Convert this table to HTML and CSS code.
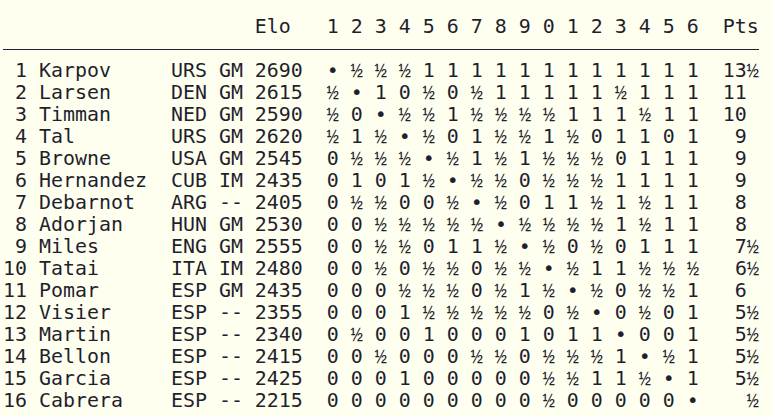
FILE: index.html
```html
<!DOCTYPE html>
<html lang="en">
<head>
<meta charset="utf-8">
<title>Crosstable</title>
<link rel="stylesheet" href="styles.css">
</head>
<body>
<div class="table">
<pre class="head">                     Elo   1 2 3 4 5 6 7 8 9 0 1 2 3 4 5 6  Pts</pre>
<div class="rule"></div>
<pre class="rows"> 1 Karpov     URS GM 2690  • <i>½</i> <i>½</i> <i>½</i> 1 1 1 1 1 1 1 1 1 1 1 1  13<i>½</i>
 2 Larsen     DEN GM 2615  <i>½</i> • 1 0 <i>½</i> 0 <i>½</i> 1 1 1 1 1 <i>½</i> 1 1 1  11
 3 Timman     NED GM 2590  <i>½</i> 0 • <i>½</i> <i>½</i> 1 <i>½</i> <i>½</i> <i>½</i> <i>½</i> 1 1 1 <i>½</i> 1 1  10
 4 Tal        URS GM 2620  <i>½</i> 1 <i>½</i> • <i>½</i> 0 1 <i>½</i> <i>½</i> 1 <i>½</i> 0 1 1 0 1   9
 5 Browne     USA GM 2545  0 <i>½</i> <i>½</i> <i>½</i> • <i>½</i> 1 <i>½</i> 1 <i>½</i> <i>½</i> <i>½</i> 0 1 1 1   9
 6 Hernandez  CUB IM 2435  0 1 0 1 <i>½</i> • <i>½</i> <i>½</i> 0 <i>½</i> <i>½</i> <i>½</i> 1 1 1 1   9
 7 Debarnot   ARG -- 2405  0 <i>½</i> <i>½</i> 0 0 <i>½</i> • <i>½</i> 0 1 1 <i>½</i> 1 <i>½</i> 1 1   8
 8 Adorjan    HUN GM 2530  0 0 <i>½</i> <i>½</i> <i>½</i> <i>½</i> <i>½</i> • <i>½</i> <i>½</i> <i>½</i> <i>½</i> 1 <i>½</i> 1 1   8
 9 Miles      ENG GM 2555  0 0 <i>½</i> <i>½</i> 0 1 1 <i>½</i> • <i>½</i> 0 <i>½</i> 0 1 1 1   7<i>½</i>
10 Tatai      ITA IM 2480  0 0 <i>½</i> 0 <i>½</i> <i>½</i> 0 <i>½</i> <i>½</i> • <i>½</i> 1 1 <i>½</i> <i>½</i> <i>½</i>   6<i>½</i>
11 Pomar      ESP GM 2435  0 0 0 <i>½</i> <i>½</i> <i>½</i> 0 <i>½</i> 1 <i>½</i> • <i>½</i> 0 <i>½</i> <i>½</i> 1   6
12 Visier     ESP -- 2355  0 0 0 1 <i>½</i> <i>½</i> <i>½</i> <i>½</i> <i>½</i> 0 <i>½</i> • 0 <i>½</i> 0 1   5<i>½</i>
13 Martin     ESP -- 2340  0 <i>½</i> 0 0 1 0 0 0 1 0 1 1 • 0 0 1   5<i>½</i>
14 Bellon     ESP -- 2415  0 0 <i>½</i> 0 0 0 <i>½</i> <i>½</i> 0 <i>½</i> <i>½</i> <i>½</i> 1 • <i>½</i> 1   5<i>½</i>
15 Garcia     ESP -- 2425  0 0 0 1 0 0 0 0 0 <i>½</i> <i>½</i> 1 1 <i>½</i> • 1   5<i>½</i>
16 Cabrera    ESP -- 2215  0 0 0 0 0 0 0 0 0 <i>½</i> 0 0 0 0 0 •    <i>½</i></pre>
</div>
</body>
</html>
```

FILE: styles.css
```css
html, body {
  margin: 0;
  padding: 0;
  background: #fffff0;
}

.table {
  padding: 16px 0 0 3px;
  font-family: "DejaVu Sans Mono", monospace;
  font-size: 19.93px;
  line-height: 22px;
  color: #1f1f2e;
}

.head,
.rows {
  margin: 0;
  font: inherit;
  white-space: pre;
}

.rows i {
  font-style: normal;
  font-family: "Liberation Mono", monospace;
  font-size: 20px;
  line-height: 16px;
}

.rule {
  width: 756px;
  height: 22px;
  box-sizing: border-box;
  padding-top: 11px;
}

.rule::before {
  content: "";
  display: block;
  border-top: 1.5px solid #1f1f2e;
}
```
